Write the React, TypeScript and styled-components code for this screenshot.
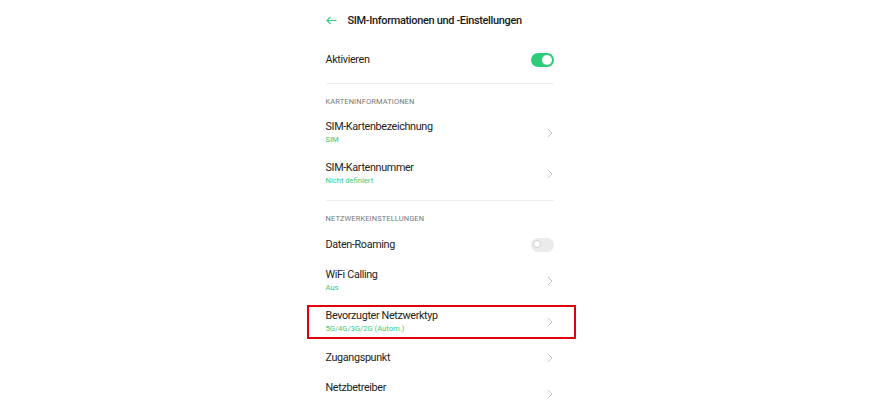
import React from "react";
import styled, { createGlobalStyle } from "styled-components";

const Global = createGlobalStyle`
  html, body { margin: 0; padding: 0; background: #ffffff; }
  body { font-family: Roboto, "Noto Sans", "Liberation Sans", sans-serif; color: #222; }
`;

const Page = styled.div`
  width: 879px;
  height: 400px;
  overflow: hidden;
  display: flex;
  justify-content: center;
  align-items: flex-start;
`;

const Column = styled.div`
  width: 228px;
  display: flex;
  flex-direction: column;
  & > * { flex-shrink: 0; }
`;

const Header = styled.div`
  height: 44px;
  display: flex;
  align-items: center;
  gap: 11px;
  padding-bottom: 3px;
  box-sizing: border-box;
`;

const Title = styled.div`
  font-size: 11px;
  font-weight: 500;
  color: #1a1a1a;
  letter-spacing: -0.35px;
`;

const Row = styled.div<{ $tall?: boolean; $highlight?: boolean }>`
  position: relative;
  height: ${(p) => (p.$tall ? 41 : 31)}px;
  display: flex;
  align-items: center;
  justify-content: space-between;
  ${(p) =>
    p.$highlight &&
    `
    &::after {
      content: "";
      position: absolute;
      left: -19px;
      right: -22px;
      top: 4px;
      bottom: 3px;
      border: 2px solid #e0000a;
      pointer-events: none;
    }
  `}
`;

const Texts = styled.div`
  display: flex;
  flex-direction: column;
  gap: 2px;
`;

const Label = styled.div`
  font-size: 10.8px;
  color: #222;
  line-height: 13px;
  letter-spacing: -0.35px;
`;

const Sub = styled.div`
  font-size: 7.6px;
  color: #33cc80;
  line-height: 10px;
`;

const Divider = styled.div<{ $gap?: number }>`
  height: 1px;
  background: #efefef;
  margin-top: ${(p) => p.$gap ?? 8}px;
`;

const SectionTitle = styled.div`
  height: 28px;
  box-sizing: border-box;
  padding-top: 13px;
  font-size: 7.5px;
  color: #777;
  letter-spacing: 0.1px;
  line-height: 10px;
`;

const Toggle = styled.div<{ $on?: boolean }>`
  width: 23px;
  height: 14px;
  border-radius: 7px;
  background: ${(p) => (p.$on ? "#2ecc7a" : "#ebebeb")};
  position: relative;
  flex-shrink: 0;
  &::after {
    content: "";
    position: absolute;
    border-radius: 50%;
    background: #fff;
    ${(p) =>
      p.$on
        ? "top: 2px; right: 2px; width: 10px; height: 10px;"
        : "border: 1.5px solid #d0d0d0; top: 2.5px; left: 2.5px; width: 6px; height: 6px;"}
  }
`;

const Chevron = () => (
  <svg width="6" height="10" viewBox="0 0 6 10" style={{ marginRight: 1, flexShrink: 0 }}>
    <path d="M1 1 L5 5 L1 9" fill="none" stroke="#c4c4c4" strokeWidth="1" />
  </svg>
);

const BackArrow = () => (
  <svg width="11" height="9" viewBox="0 0 11 9">
    <path d="M10.5 4.5 H1 M4.5 1 L1 4.5 L4.5 8" fill="none" stroke="#33cc80" strokeWidth="1.1" />
  </svg>
);

export default function App() {
  return (
    <>
      <Global />
      <Page>
        <Column>
          <Header>
            <BackArrow />
            <Title>SIM-Informationen und -Einstellungen</Title>
          </Header>
          <Row>
            <Label>Aktivieren</Label>
            <Toggle $on />
          </Row>
          <Divider />
          <SectionTitle>KARTENINFORMATIONEN</SectionTitle>
          <Row $tall>
            <Texts>
              <Label>SIM-Kartenbezeichnung</Label>
              <Sub>SIM</Sub>
            </Texts>
            <Chevron />
          </Row>
          <Row $tall>
            <Texts>
              <Label>SIM-Kartennummer</Label>
              <Sub>Nicht definiert</Sub>
            </Texts>
            <Chevron />
          </Row>
          <Divider $gap={6} />
          <SectionTitle>NETZWERKEINSTELLUNGEN</SectionTitle>
          <Row>
            <Label>Daten-Roaming</Label>
            <Toggle />
          </Row>
          <Row $tall>
            <Texts>
              <Label>WiFi Calling</Label>
              <Sub>Aus</Sub>
            </Texts>
            <Chevron />
          </Row>
          <Row $tall $highlight>
            <Texts>
              <Label>Bevorzugter Netzwerktyp</Label>
              <Sub>5G/4G/3G/2G (Autom.)</Sub>
            </Texts>
            <Chevron />
          </Row>
          <Row>
            <Label>Zugangspunkt</Label>
            <Chevron />
          </Row>
          <Row $tall>
            <Texts>
              <Label>Netzbetreiber</Label>
              <Sub>&nbsp;</Sub>
            </Texts>
            <Chevron />
          </Row>
        </Column>
      </Page>
    </>
  );
}
